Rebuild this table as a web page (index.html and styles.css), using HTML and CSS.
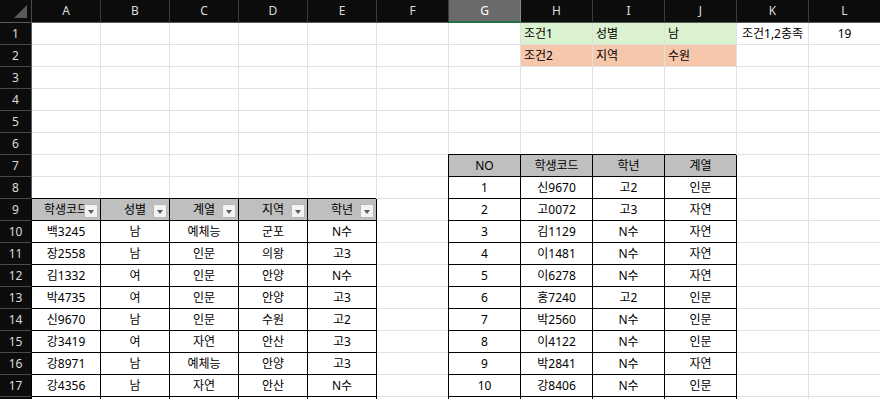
FILE: index.html
```html
<!DOCTYPE html>
<html lang="ko">
<head>
<meta charset="utf-8">
<title>Sheet</title>
<link rel="stylesheet" href="styles.css">
</head>
<body>
<div class="sheet">
  <div class="corner"><span class="tri"></span></div>
  <div class="ch">A</div><div class="ch">B</div><div class="ch">C</div><div class="ch">D</div><div class="ch">E</div><div class="ch">F</div><div class="ch sel">G</div><div class="ch">H</div><div class="ch">I</div><div class="ch">J</div><div class="ch">K</div><div class="ch">L</div>

  <div class="rh">1</div>
  <div></div><div></div><div></div><div></div><div></div><div></div><div></div>
  <div class="gr">조건1</div><div class="gr">성별</div><div class="gr">남</div><div class="ctr">조건1,2충족</div><div class="ctr">19</div>

  <div class="rh">2</div>
  <div></div><div></div><div></div><div></div><div></div><div></div><div></div>
  <div class="pe">조건2</div><div class="pe">지역</div><div class="pe">수원</div><div></div><div></div>

  <div class="rh">3</div>
  <div></div><div></div><div></div><div></div><div></div><div></div><div></div><div></div><div></div><div></div><div></div><div></div>
  <div class="rh">4</div>
  <div></div><div></div><div></div><div></div><div></div><div></div><div></div><div></div><div></div><div></div><div></div><div></div>
  <div class="rh">5</div>
  <div></div><div></div><div></div><div></div><div></div><div></div><div></div><div></div><div></div><div></div><div></div><div></div>
  <div class="rh">6</div>
  <div></div><div></div><div></div><div></div><div></div><div></div><div></div><div></div><div></div><div></div><div></div><div></div>

  <div class="rh">7</div>
  <div></div><div></div><div></div><div></div><div></div><div></div>
  <div class="tb th">NO</div><div class="tb th">학생코드</div><div class="tb th">학년</div><div class="tb th">계열</div>
  <div></div><div></div>

  <div class="rh">8</div>
  <div></div><div></div><div></div><div></div><div></div><div></div>
  <div class="tb">1</div><div class="tb">신9670</div><div class="tb">고2</div><div class="tb">인문</div>
  <div></div><div></div>

  <div class="rh">9</div>
  <div class="tb th fh">학생코드<span class="fb"></span></div><div class="tb th fh">성별<span class="fb"></span></div><div class="tb th fh">계열<span class="fb"></span></div><div class="tb th fh">지역<span class="fb"></span></div><div class="tb th fh">학년<span class="fb"></span></div>
  <div></div>
  <div class="tb">2</div><div class="tb">고0072</div><div class="tb">고3</div><div class="tb">자연</div>
  <div></div><div></div>

  <div class="rh">10</div>
  <div class="tb">백3245</div><div class="tb">남</div><div class="tb">예체능</div><div class="tb">군포</div><div class="tb">N수</div>
  <div></div>
  <div class="tb">3</div><div class="tb">김1129</div><div class="tb">N수</div><div class="tb">자연</div>
  <div></div><div></div>

  <div class="rh">11</div>
  <div class="tb">장2558</div><div class="tb">남</div><div class="tb">인문</div><div class="tb">의왕</div><div class="tb">고3</div>
  <div></div>
  <div class="tb">4</div><div class="tb">이1481</div><div class="tb">N수</div><div class="tb">자연</div>
  <div></div><div></div>

  <div class="rh">12</div>
  <div class="tb">김1332</div><div class="tb">여</div><div class="tb">인문</div><div class="tb">안양</div><div class="tb">N수</div>
  <div></div>
  <div class="tb">5</div><div class="tb">이6278</div><div class="tb">N수</div><div class="tb">자연</div>
  <div></div><div></div>

  <div class="rh">13</div>
  <div class="tb">박4735</div><div class="tb">여</div><div class="tb">인문</div><div class="tb">안양</div><div class="tb">고3</div>
  <div></div>
  <div class="tb">6</div><div class="tb">홍7240</div><div class="tb">고2</div><div class="tb">인문</div>
  <div></div><div></div>

  <div class="rh">14</div>
  <div class="tb">신9670</div><div class="tb">남</div><div class="tb">인문</div><div class="tb">수원</div><div class="tb">고2</div>
  <div></div>
  <div class="tb">7</div><div class="tb">박2560</div><div class="tb">N수</div><div class="tb">인문</div>
  <div></div><div></div>

  <div class="rh">15</div>
  <div class="tb">강3419</div><div class="tb">여</div><div class="tb">자연</div><div class="tb">안산</div><div class="tb">고3</div>
  <div></div>
  <div class="tb">8</div><div class="tb">이4122</div><div class="tb">N수</div><div class="tb">인문</div>
  <div></div><div></div>

  <div class="rh">16</div>
  <div class="tb">강8971</div><div class="tb">남</div><div class="tb">예체능</div><div class="tb">안양</div><div class="tb">고3</div>
  <div></div>
  <div class="tb">9</div><div class="tb">박2841</div><div class="tb">N수</div><div class="tb">자연</div>
  <div></div><div></div>

  <div class="rh">17</div>
  <div class="tb">강4356</div><div class="tb">남</div><div class="tb">자연</div><div class="tb">안산</div><div class="tb">N수</div>
  <div></div>
  <div class="tb">10</div><div class="tb">강8406</div><div class="tb">N수</div><div class="tb">인문</div>
  <div></div><div></div>

  <div class="rh"></div>
  <div class="tb"></div><div class="tb"></div><div class="tb"></div><div class="tb"></div><div class="tb"></div>
  <div></div>
  <div class="tb"></div><div class="tb"></div><div class="tb"></div><div class="tb"></div>
  <div></div><div></div>
</div>
</body>
</html>
```

FILE: styles.css
```css
html, body {
  margin: 0;
  padding: 0;
  background: #ffffff;
  overflow: hidden;
}

.sheet {
  display: grid;
  grid-template-columns: 32px repeat(5, 69px) repeat(7, 72px);
  grid-template-rows: 23px;
  grid-auto-rows: 22px;
  font-family: "Noto Sans", "Noto Sans CJK KR", sans-serif;
  font-size: 12px;
  color: #000;
  width: 881px;
}

.sheet > div {
  box-sizing: border-box;
  border-right: 1px solid #e1e1e1;
  border-bottom: 1px solid #e1e1e1;
  padding: 0 3px;
  line-height: 21px;
  white-space: nowrap;
  overflow: hidden;
}

.sheet > .corner {
  background: #0c0c0c;
  border-right: 1px solid #4a4a4a;
  border-bottom: 1px solid #5a5a5a;
  position: relative;
  padding: 0;
}

.tri {
  position: absolute;
  left: 14px;
  top: 5px;
  width: 0;
  height: 0;
  border-left: 13px solid transparent;
  border-bottom: 13px solid #595959;
}

.sheet > .ch {
  background: #0c0c0c;
  color: #dcdcdc;
  text-align: center;
  border-right: 1px solid #3c3c3c;
  border-bottom: 1px solid #5a5a5a;
  line-height: 22px;
}

.sheet > .ch.sel {
  background: #6a6a6a;
  color: #ffffff;
  border-right-color: #8a8a8a;
  border-bottom: 2px solid #217346;
}

.sheet > .rh {
  background: #0c0c0c;
  color: #dcdcdc;
  text-align: center;
  border-right: 1px solid #5a5a5a;
  border-bottom: 1px solid #4a4a4a;
  padding: 0;
}

.sheet > .gr {
  background: #daf2d0;
}

.sheet > .pe {
  background: #f7c7ac;
}

.sheet > .ctr {
  text-align: center;
  padding: 0;
}

.sheet > .tb {
  border-right: 1px solid #000;
  border-bottom: 1px solid #000;
  box-shadow: -1px -1px 0 #000;
  text-align: center;
  padding: 0 2px;
}

.sheet > .th {
  background: #bfbfbf;
}

.sheet > .fh {
  position: relative;
}

.fb {
  position: absolute;
  right: 2px;
  bottom: 2px;
  width: 14px;
  height: 14px;
  box-sizing: border-box;
  background: #f3f3f3;
  border: 1px solid #b8b8b8;
}

.fb::after {
  content: "";
  position: absolute;
  left: 3px;
  top: 5px;
  width: 0;
  height: 0;
  border-left: 3.5px solid transparent;
  border-right: 3.5px solid transparent;
  border-top: 4px solid #5a5a5a;
}
```
